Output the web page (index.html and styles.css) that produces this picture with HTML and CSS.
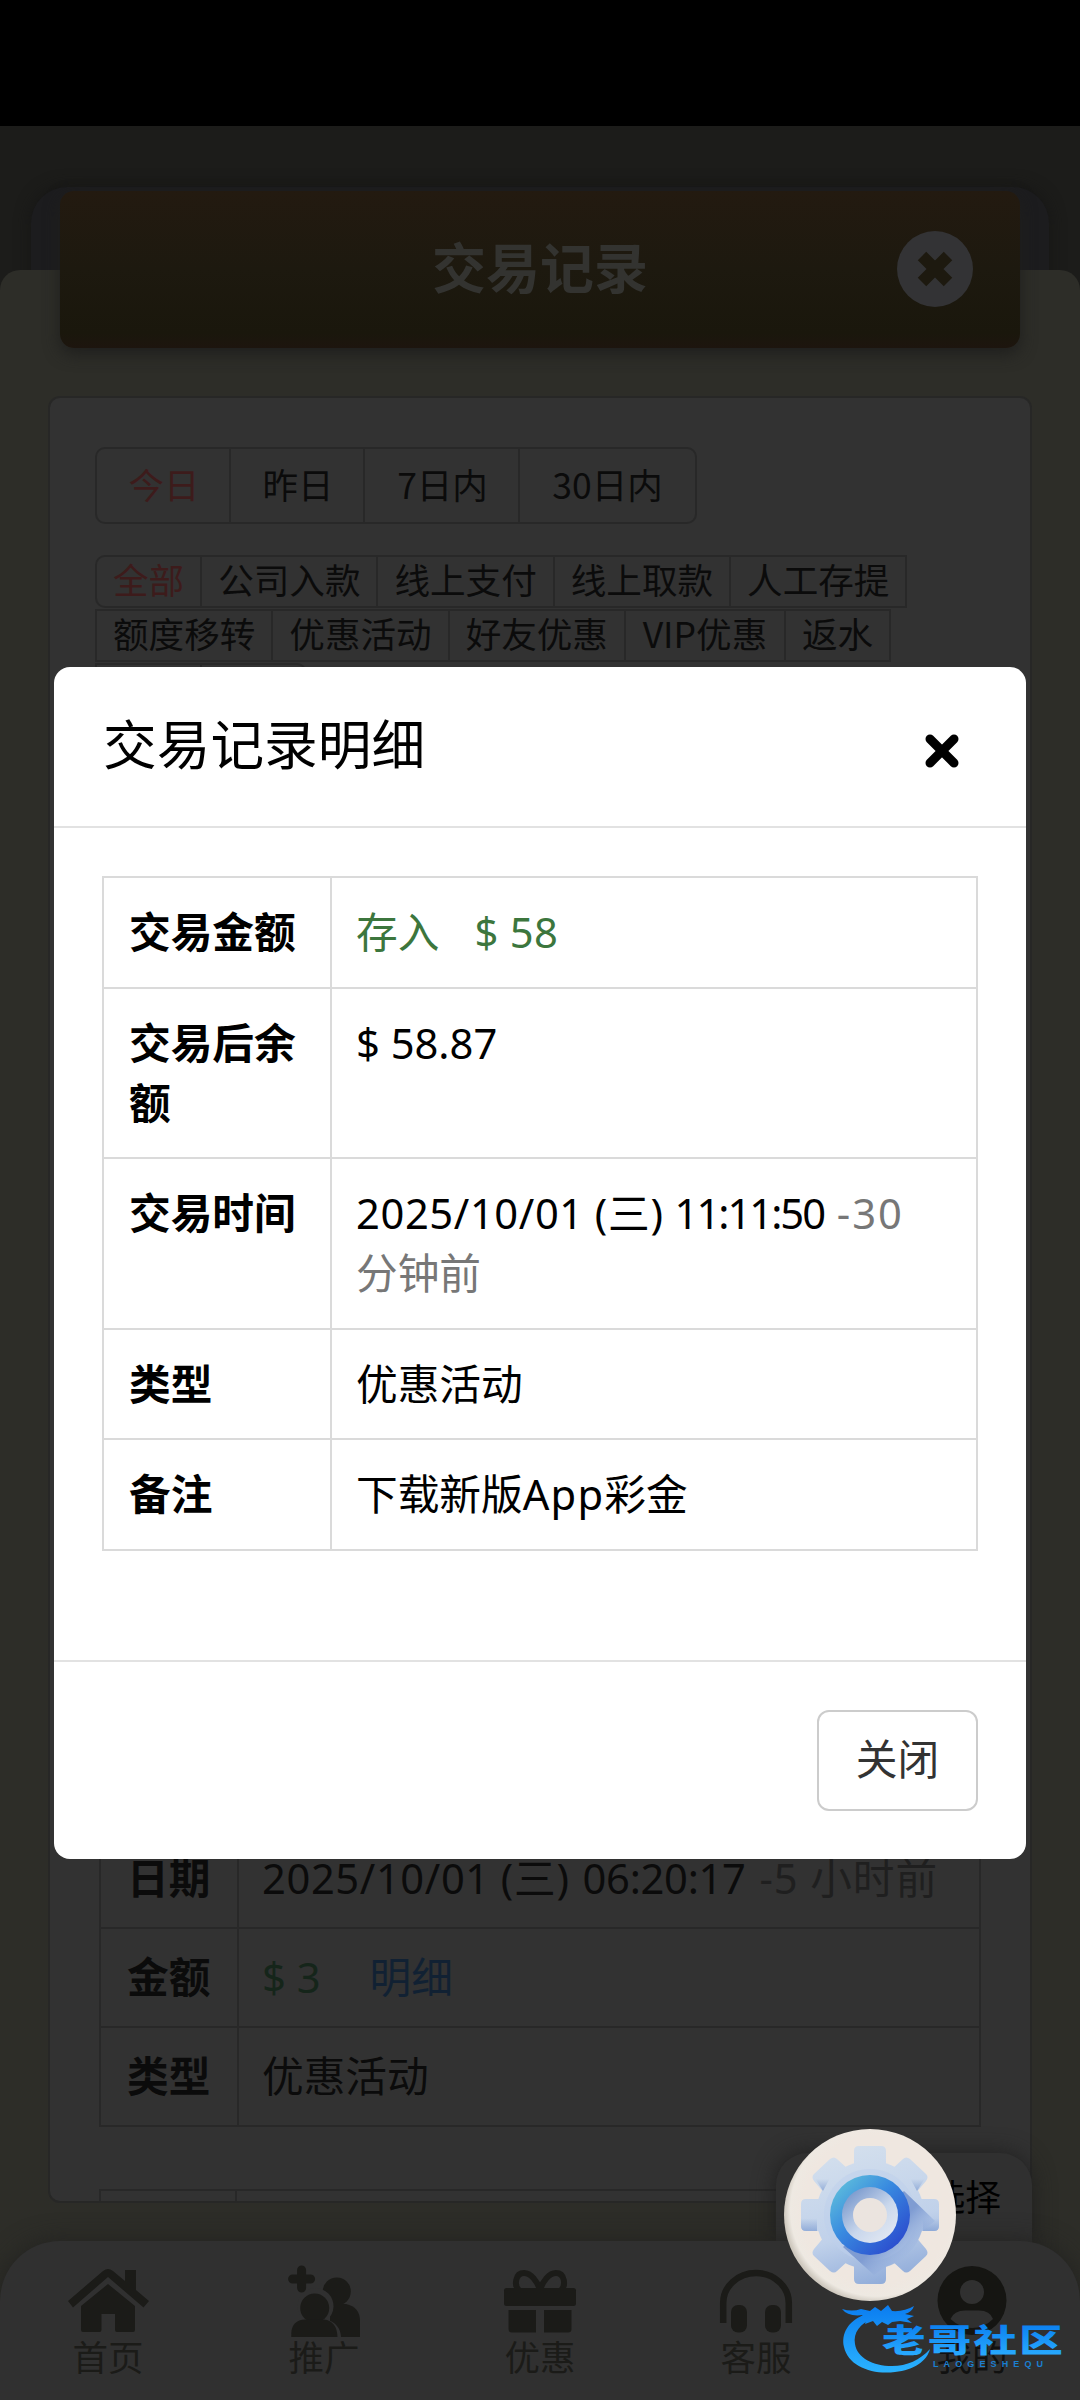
FILE: index.html
```html
<!DOCTYPE html>
<html lang="zh-CN">
<head>
    <meta charset="UTF-8">
    <meta name="viewport" content="width=device-width, initial-scale=1.0">
    <title>交易记录</title>
    <link rel="stylesheet" href="styles.css">
</head>
<body>
    <div class="status-bar"></div>
    <div class="hero"></div>

    <main class="sheet">
        <header class="page-title">
            <h1>交易记录</h1>
            <button class="round-close">
                <svg viewBox="-38 -38 76 76">
                    <circle r="38" fill="#333335"/>
                    <path d="M-13 -13L13 13M13 -13L-13 13" stroke="#1d190f" stroke-width="12"/>
                </svg>
            </button>
        </header>

        <section class="panel">
            <div class="date-tabs">
                <span class="date-tab active">今日</span>
                <span class="date-tab">昨日</span>
                <span class="date-tab wide">7日内</span>
                <span class="date-tab wider">30日内</span>
            </div>

            <div class="type-tabs">
                <div class="type-row">
                    <span class="type-tab active">全部</span>
                    <span class="type-tab">公司入款</span>
                    <span class="type-tab">线上支付</span>
                    <span class="type-tab">线上取款</span>
                    <span class="type-tab">人工存提</span>
                </div>
                <div class="type-row">
                    <span class="type-tab">额度移转</span>
                    <span class="type-tab">优惠活动</span>
                    <span class="type-tab">好友优惠</span>
                    <span class="type-tab vip">VIP优惠</span>
                    <span class="type-tab">返水</span>
                </div>
                <div class="type-row">
                    <span class="type-tab short"></span>
                    <span class="type-tab short last"></span>
                </div>
            </div>

            <div class="records">
                <div class="record">
                    <div class="record-label">日期</div>
                    <div class="record-value"><span class="date">2025/10/01</span> <span class="week">(三)</span> <span class="clock-late">06:20:17</span> <span class="ago">-5 小时前</span></div>
                    <div class="record-label">金额</div>
                    <div class="record-value"><span class="money">$ 3</span><a class="detail">明细</a></div>
                    <div class="record-label">类型</div>
                    <div class="record-value">优惠活动</div>
                </div>
                <div class="record-next"><span></span><span></span></div>
            </div>
        </section>
    </main>

    <div class="select-float">选择</div>

    <nav class="tabbar">
        <a class="tab">
            <svg viewBox="0 0 80 80">
                <path d="M0 39L35 9Q40 5 45 9L57 19V8H68V28L81 39L75.500 45.500L40 15L5 45.500Z"/>
                <path d="M40 22L67 44V68Q67 70 65 70H49Q47 70 47 68V52H33.500V68Q33.500 70 31.500 70H15Q13 70 13 68V44Z"/>
            </svg>
            <span>首页</span>
        </a>
        <a class="tab">
            <svg viewBox="0 0 80 80">
                <path d="M17.600 8V26M8.600 17H26.600" stroke="#1b1b18" stroke-width="9" stroke-linecap="round"/>
                <circle cx="52.800" cy="29.500" r="14"/>
                <path d="M46 42H62Q76 45 76 59V75H46Z"/>
                <path class="gap" d="M7 75C7 65 12 59 20 58A18 18 0 1 1 43 58C51 59 57 67 57 75"/>
                <circle cx="30.700" cy="46" r="14.500"/>
                <path d="M7.300 75V71Q8 58 21 57.500H40Q53 59 53.500 75Z"/>
            </svg>
            <span>推广</span>
        </a>
        <a class="tab">
            <svg viewBox="0 0 80 80">
                <path d="M40 28C37 19 31 11 24 11C15 11 14 24 19 28M40 28C43 19 49 11 56 11C65 11 66 24 61 28" fill="none" stroke="#1b1b18" stroke-width="6"/>
                <rect x="4" y="26" width="72" height="18" rx="2.500"/>
                <path d="M8.500 48H36V70.500H12Q8.500 70.500 8.500 67ZM44 48H71.500V67Q71.500 70.500 68 70.500H44Z"/>
            </svg>
            <span>优惠</span>
        </a>
        <a class="tab">
            <svg viewBox="0 0 80 80">
                <path d="M7.200 61V41A32.800 30 0 0 1 72.800 41V61" fill="none" stroke="#1b1b18" stroke-width="6.500"/>
                <rect x="15" y="43" width="16" height="27.500" rx="7"/>
                <rect x="49" y="43" width="16" height="27.500" rx="7"/>
            </svg>
            <span>客服</span>
        </a>
        <a class="tab dark">
            <svg viewBox="0 0 80 80">
                <circle cx="40" cy="38.500" r="34.500"/>
                <circle cx="40" cy="30" r="12" fill="#303030"/>
                <path d="M18.500 57Q22 48.500 33 48.500H47Q58 48.500 61 57Q52 66 40 66Q28 66 18.500 57Z" fill="#303030"/>
            </svg>
            <span>我的</span>
        </a>
    </nav>

    <div class="modal">
        <div class="modal-header">
            <h2>交易记录明细</h2>
            <svg class="modal-close" viewBox="0 0 34 34">
                <path d="M5 5L29 29M29 5L5 29" stroke="#000" stroke-width="9" stroke-linecap="round"/>
            </svg>
        </div>
        <div class="modal-body">
            <table class="detail-table">
                <tr>
                    <th>交易金额</th>
                    <td class="green">存入<span class="amount">$ 58</span></td>
                </tr>
                <tr>
                    <th>交易后余额</th>
                    <td>$ 58.87</td>
                </tr>
                <tr>
                    <th>交易时间</th>
                    <td><span class="date">2025/10/01</span> <span class="week">(三)</span> <span class="clock">11:11:50</span> <span class="muted"><span class="minutes">-30</span><br>分钟前</span></td>
                </tr>
                <tr>
                    <th>类型</th>
                    <td>优惠活动</td>
                </tr>
                <tr>
                    <th>备注</th>
                    <td>下载新版<span class="latin">App</span>彩金</td>
                </tr>
            </table>
        </div>
        <div class="modal-footer">
            <button class="btn-close">关闭</button>
        </div>
    </div>

    <!-- floating settings gear -->
    <svg class="gear" viewBox="-86 -86 172 172">
        <defs>
            <radialGradient id="plate" cx="0.54" cy="0.47" r="0.54">
                <stop offset="0.8" stop-color="#efe7e0"/>
                <stop offset="0.93" stop-color="#eee9e2"/>
                <stop offset="1" stop-color="#cfc9bf"/>
            </radialGradient>
            <linearGradient id="body" gradientUnits="userSpaceOnUse" x1="-20" y1="-69" x2="20" y2="69">
                <stop offset="0" stop-color="#d3dfed"/>
                <stop offset="0.6" stop-color="#c0d1ea"/>
                <stop offset="1" stop-color="#8fabd9"/>
            </linearGradient>
            <linearGradient id="tooth" x1="0" y1="0" x2="0" y2="1">
                <stop offset="0.4" stop-color="#86a3d4" stop-opacity="0"/>
                <stop offset="1" stop-color="#86a3d4" stop-opacity="0.8"/>
            </linearGradient>
            <linearGradient id="cast" gradientUnits="userSpaceOnUse" x1="12" y1="12" x2="44" y2="44">
                <stop offset="0.2" stop-color="#7f9cd2"/>
                <stop offset="1" stop-color="#a9c0e5" stop-opacity="0.3"/>
            </linearGradient>
            <linearGradient id="ring" x1="0.1" y1="0.2" x2="0.8" y2="0.9">
                <stop offset="0" stop-color="#58b5dc"/>
                <stop offset="0.4" stop-color="#398be0"/>
                <stop offset="1" stop-color="#2c50cf"/>
            </linearGradient>
            <linearGradient id="inner" x1="0.1" y1="0.1" x2="0.8" y2="0.9">
                <stop offset="0" stop-color="#7797cc"/>
                <stop offset="0.6" stop-color="#c9d7ec"/>
                <stop offset="1" stop-color="#dfe6f1"/>
            </linearGradient>
        </defs>
        <circle r="86" fill="url(#plate)"/>
        <g fill="url(#body)">
            <circle r="54"/>
            <path d="M-16 -50V-64Q-16 -69 -11 -69H11Q16 -69 16 -64V-50ZM-16 50V64Q-16 69 -11 69H11Q16 69 16 64V50ZM-50 -16H-64Q-69 -16 -69 -11V11Q-69 16 -64 16H-50ZM50 -16H64Q69 -16 69 -11V11Q69 16 64 16H50Z"/>
            <path d="M-45 -21L-56 -34Q-59 -38 -56 -41L-40 -56Q-36 -59 -33 -56L-21 -45ZM45 -21L56 -34Q59 -38 56 -41L40 -56Q36 -59 33 -56L21 -45ZM-45 21L-56 34Q-59 38 -56 41L-40 56Q-36 59 -33 56L-21 45ZM45 21L56 34Q59 38 56 41L40 56Q36 59 33 56L21 45Z"/>
        </g>
        <path d="M-69 -5H-53V16H-64Q-69 16 -69 11ZM53 -5H69V11Q69 16 64 16H53Z" fill="url(#tooth)"/>
        <path d="M-57 -40L-44 -44L-40 -37L-47 -24ZM57 -40L44 -44L40 -37L47 -24Z" fill="url(#tooth)"/>
        <circle r="46" fill="#bdd0eb" opacity="0.5"/>
        <path d="M34 -24L65 6L52 16A54 54 0 0 1 16 52L4 60L-27 32Z" fill="url(#cast)"/>
        <circle r="40" fill="url(#ring)"/>
        <circle r="28" fill="url(#inner)"/>
        <circle r="17" fill="#ebe4df"/>
    </svg>

    <!-- community badge -->
    <svg class="badge" viewBox="0 0 250 110">
        <defs>
            <linearGradient id="blue" gradientUnits="userSpaceOnUse" x1="0" y1="16" x2="0" y2="84">
                <stop offset="0" stop-color="#0b7df0"/>
                <stop offset="1" stop-color="#2bb4ff"/>
            </linearGradient>
            <linearGradient id="letters" x1="0" y1="0" x2="0" y2="1">
                <stop offset="0.2" stop-color="#0b80f0"/>
                <stop offset="0.9" stop-color="#2aacff"/>
            </linearGradient>
        </defs>
        <g fill="url(#blue)">
            <path d="M34 25C18 31 11 44 14 57C18 76 42 85 65 82C84 80 97 71 100 59C90 70 77 76 62 76C43 76 27 68 25 54C23 43 30 33 43 29Z"/>
            <path d="M12 19Q22 22 31 19L40 21L45 17L51 21L58 15L62 21Q74 22 84 16Q82 22 75 24L84 26L77 29L82 33L70 31L62 32L58 35L52 32L47 36L43 31L35 34L37 28L28 29L33 25Q18 27 12 19Z"/>
        </g>
        <text class="badge-name" transform="translate(52 62) scale(1.360 1)" textLength="133" lengthAdjust="spacing" fill="url(#letters)">老哥社区</text>
        <text class="badge-latin" x="103" y="77" textLength="110" fill="#1b7fd0">LAOGESHEQU</text>
    </svg>
</body>
</html>
```
FILE: styles.css
```css
* {
    box-sizing: border-box;
}

body {
    position: relative;
    width: 1080px;
    height: 2400px;
    margin: 0;
    overflow: hidden;
    display: flex;
    flex-direction: column;
    background: #1c1c1a;
    font-family: "Noto Sans", "Noto Sans CJK SC", sans-serif;
    font-size: 41.700px;
    line-height: 60px;
    color: #000;
}

h1, h2 {
    margin: 0;
    font-family: "Noto Sans CJK SC", sans-serif;
}

button {
    font: inherit;
    padding: 0;
}

.status-bar {
    height: 126px;
    background: #000;
}

.hero {
    height: 144px;
    padding: 61px 31px 0;
    overflow: hidden;
}

.hero::before {
    content: "";
    display: block;
    height: 100px;
    border-radius: 36px 36px 0 0;
    background: #1c1c1e;
    box-shadow: 0 0 16px #161615;
}

.sheet {
    flex: 1;
    background: #2d2d28;
    border-radius: 20px 20px 0 0;
}

.page-title {
    display: flex;
    align-items: center;
    justify-content: flex-end;
    height: 157px;
    margin: -79px 60px 0;
    padding: 0 47px 2px 0;
    border-radius: 14px;
    background: linear-gradient(#231a10, #1d190f 50%, #1a170c 90%, #1d150e);
    box-shadow: 0 6px 16px #1f1f1d;
}

.page-title h1 {
    flex: 1;
    padding: 0 0 6px 123px;
    text-align: center;
    font-size: 54px;
    color: #333330;
}

.round-close {
    width: 76px;
    height: 76px;
    border: 0;
    background: none;
}

.round-close svg {
    display: block;
}

.panel {
    display: flex;
    flex-direction: column;
    height: 1807px;
    margin: 48px 48px 0;
    padding: 49px 46px 0 45px;
    overflow: hidden;
    border: 2px solid #272726;
    border-radius: 12px;
    background: #323232;
}

.date-tabs {
    display: flex;
    align-self: flex-start;
    height: 77px;
    border: 2px solid #282828;
    border-radius: 10px;
    color: #0b0b0b;
    font-family: "Noto Sans CJK SC", sans-serif;
}

.date-tab {
    width: 134px;
    padding-left: 2px;
    text-align: center;
    font-size: 35.500px;
    line-height: 70px;
    border-right: 2px solid #282828;
}

.date-tab.wide {
    width: 155px;
}

.date-tab.wider {
    width: 175px;
    padding-left: 0;
    border-right: 0;
}

.date-tab.active,
.type-tab.active {
    color: #3d1b1b;
}

.type-tabs {
    margin-top: 31px;
    font-family: "Noto Sans CJK SC", sans-serif;
}

.type-row {
    display: flex;
    margin-bottom: 1px;
}

.type-tab {
    height: 53px;
    padding: 0 16px;
    margin-right: -2px;
    border: 2px solid #282828;
    font-size: 35.600px;
    line-height: 43px;
    color: #0b0b0b;
}

.type-row:first-child .type-tab:first-child {
    border-radius: 10px 0 0 10px;
}

.type-tab.vip {
    width: 162px;
    text-align: center;
    padding: 0;
}

.type-tab.short {
    width: 107px;
}

.type-tab.last {
    border-radius: 0 10px 10px 0;
}

.records {
    margin: auto 3px 0 4px;
    color: #0b0b0b;
}

.record {
    display: grid;
    grid-template-columns: 138px 1fr;
    border: solid #282828;
    border-width: 2px 0 0 2px;
}

.record-label,
.record-value {
    height: 99px;
    line-height: 96px;
    border: solid #282828;
    border-width: 0 2px 2px 0;
    white-space: nowrap;
}

.record-label {
    padding-left: 26px;
    font-weight: 700;
}

.record-value {
    padding-left: 23px;
}

.date {
    letter-spacing: 0.600px;
}

.week {
    letter-spacing: 0.800px;
}

.clock {
    letter-spacing: -2px;
    margin-right: 2px;
}

.clock-late {
    margin-left: 2px;
    letter-spacing: -0.300px;
}

.ago {
    margin-left: 3px;
    letter-spacing: 0.900px;
    color: #1f1f1f;
}

.money {
    color: #15251a;
}

.detail {
    margin-left: 49px;
    color: #112133;
}

.record-next {
    display: flex;
    height: 12px;
    margin-top: 62px;
    border: solid #282828;
    border-width: 2px 2px 0;
}

.record-next span:first-child {
    width: 136px;
    border-right: 2px solid #282828;
}

.select-float {
    position: absolute;
    left: 776px;
    top: 2153px;
    width: 256px;
    height: 100px;
    padding-right: 31px;
    border-radius: 32px 32px 0 0;
    background: #303030;
    box-shadow: 0 0 22px #1f1f1f;
    font-size: 35.800px;
    line-height: 89px;
    text-align: right;
}

.tabbar {
    position: absolute;
    left: 0;
    bottom: 0;
    display: grid;
    grid-template-columns: repeat(5, 1fr);
    width: 1080px;
    height: 159px;
    padding-top: 21px;
    border-radius: 60px 60px 0 0;
    background: #303030;
    box-shadow: 0 0 24px #222220;
}

.tab {
    display: flex;
    flex-direction: column;
    align-items: center;
    font-size: 35.500px;
    line-height: 40px;
    color: #1b1b18;
}

.tab svg {
    width: 80px;
    height: 80px;
    margin-bottom: -5px;
    overflow: visible;
    fill: #1b1b18;
}

.tab .gap {
    fill: #303030;
}

.tab.dark {
    color: #111110;
}

.tab.dark svg {
    fill: #151512;
}

.modal {
    position: absolute;
    left: 54px;
    top: 667px;
    width: 972px;
    height: 1192px;
    display: flex;
    flex-direction: column;
    border-radius: 16px;
    background: #fff;
}

.modal-header {
    display: flex;
    align-items: center;
    justify-content: space-between;
    height: 161px;
    padding: 0 67px 0 49px;
    border-bottom: 2px solid #e2e2e2;
}

.modal-header h2 {
    padding-bottom: 9px;
    font-size: 53.700px;
    font-weight: 400;
}

.modal-close {
    width: 34px;
    height: 34px;
    margin-top: 9px;
}

.modal-body {
    flex: 1;
    padding: 48px 48px 0;
}

.detail-table {
    width: 876px;
    border-collapse: collapse;
    table-layout: fixed;
}

.detail-table th,
.detail-table td {
    padding: 24px 24px 24.500px;
    border: 2px solid #dadada;
    text-align: left;
    vertical-align: top;
}

.detail-table th {
    width: 228px;
    padding-left: 25px;
    padding-right: 20px;
    font-weight: 700;
}

.green {
    color: #3c763d;
}

.amount {
    margin-left: 35px;
    letter-spacing: 0.400px;
}

.muted {
    color: #777;
}

.minutes {
    letter-spacing: 2px;
}

.latin {
    letter-spacing: 1.200px;
}

.modal-footer {
    display: flex;
    justify-content: flex-end;
    height: 199px;
    padding: 48px 48px 0 0;
    border-top: 2px solid #e2e2e2;
}

.btn-close {
    width: 161px;
    height: 101px;
    padding-bottom: 4px;
    border: 2.500px solid #ccc;
    border-radius: 12px;
    background: #fff;
    color: #333;
}

.gear {
    position: absolute;
    left: 784px;
    top: 2129px;
    width: 172px;
    height: 172px;
}

.badge {
    position: absolute;
    left: 830px;
    top: 2290px;
    width: 250px;
    height: 110px;
}

.badge-name {
    font-family: "Noto Sans CJK SC", sans-serif;
    font-size: 32px;
    font-weight: 900;
}

.badge-latin {
    font-family: "Liberation Sans", sans-serif;
    font-size: 9px;
    font-weight: 700;
}
```
